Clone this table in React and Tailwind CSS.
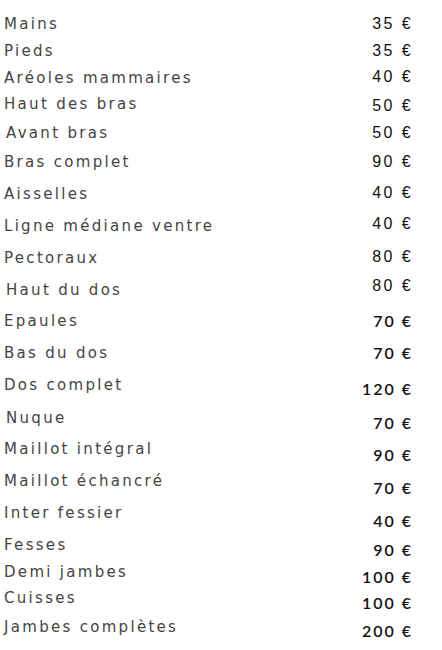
import React from "react";

const rows = [
  { l: "Mains", p: "35 €", h: "h-[27px]", pm: "mt-0", lm: "ml-0", pf: "a" },
  { l: "Pieds", p: "35 €", h: "h-[27px]", pm: "mt-0", lm: "ml-0", pf: "a" },
  { l: "Aréoles mammaires", p: "40 €", h: "h-[26px]", pm: "-mt-[1px]", lm: "ml-0", pf: "a" },
  { l: "Haut des bras", p: "50 €", h: "h-[29px]", pm: "mt-[2px]", lm: "ml-0", pf: "a" },
  { l: "Avant bras", p: "50 €", h: "h-[29px]", pm: "mt-0", lm: "ml-[2px]", pf: "a" },
  { l: "Bras complet", p: "90 €", h: "h-[32px]", pm: "mt-0", lm: "ml-0", pf: "a" },
  { l: "Aisselles", p: "40 €", h: "h-[32px]", pm: "-mt-[1px]", lm: "ml-0", pf: "a" },
  { l: "Ligne médiane ventre", p: "40 €", h: "h-[32px]", pm: "-mt-[2px]", lm: "ml-0", pf: "a" },
  { l: "Pectoraux", p: "80 €", h: "h-[32px]", pm: "-mt-[1px]", lm: "ml-0", pf: "a" },
  { l: "Haut du dos", p: "80 €", h: "h-[31px]", pm: "-mt-[4px]", lm: "ml-[2px]", pf: "a" },
  { l: "Epaules", p: "70 €", h: "h-[32px]", pm: "mt-0", lm: "ml-0", pf: "b" },
  { l: "Bas du dos", p: "70 €", h: "h-[32px]", pm: "mt-0", lm: "ml-0", pf: "b" },
  { l: "Dos complet", p: "120 €", h: "h-[33px]", pm: "mt-[4px]", lm: "ml-0", pf: "b" },
  { l: "Nuque", p: "70 €", h: "h-[31px]", pm: "mt-[5px]", lm: "ml-[2px]", pf: "b" },
  { l: "Maillot intégral", p: "90 €", h: "h-[32px]", pm: "mt-[6px]", lm: "ml-0", pf: "b" },
  { l: "Maillot échancré", p: "70 €", h: "h-[32px]", pm: "mt-[7px]", lm: "ml-0", pf: "b" },
  { l: "Inter fessier", p: "40 €", h: "h-[32px]", pm: "mt-[8px]", lm: "ml-0", pf: "b" },
  { l: "Fesses", p: "90 €", h: "h-[27px]", pm: "mt-[5px]", lm: "ml-0", pf: "b" },
  { l: "Demi jambes", p: "100 €", h: "h-[26px]", pm: "mt-[5px]", lm: "ml-0", pf: "b" },
  { l: "Cuisses", p: "100 €", h: "h-[29px]", pm: "mt-[5px]", lm: "ml-0", pf: "b" },
  { l: "Jambes complètes", p: "200 €", h: "h-[28px]", pm: "mt-[4px]", lm: "ml-0", pf: "b" },
];

export default function App() {
  return (
    <div className="w-[442px] h-[650px] bg-white pt-[14px] pl-[4px] pr-[29px] overflow-hidden">
      {rows.map((r) => (
        <div key={r.l} className={`flex items-start justify-between ${r.h}`}>
          <span
            className={`${r.lm} text-[15px] leading-[20px] tracking-[2.3px] text-[#444] font-['DejaVu_Sans',sans-serif] whitespace-nowrap`}
          >
            {r.l}
          </span>
          <span
            className={
              r.pf === "a"
                ? `${r.pm} text-[16px] leading-[20px] tracking-[2.4px] text-[#111] font-['Liberation_Sans',Arial,sans-serif] whitespace-nowrap`
                : `${r.pm} text-[16px] leading-[20px] tracking-[2px] font-semibold text-[#111] font-[Lato,sans-serif] whitespace-nowrap`
            }
          >
            {r.p}
          </span>
        </div>
      ))}
    </div>
  );
}
